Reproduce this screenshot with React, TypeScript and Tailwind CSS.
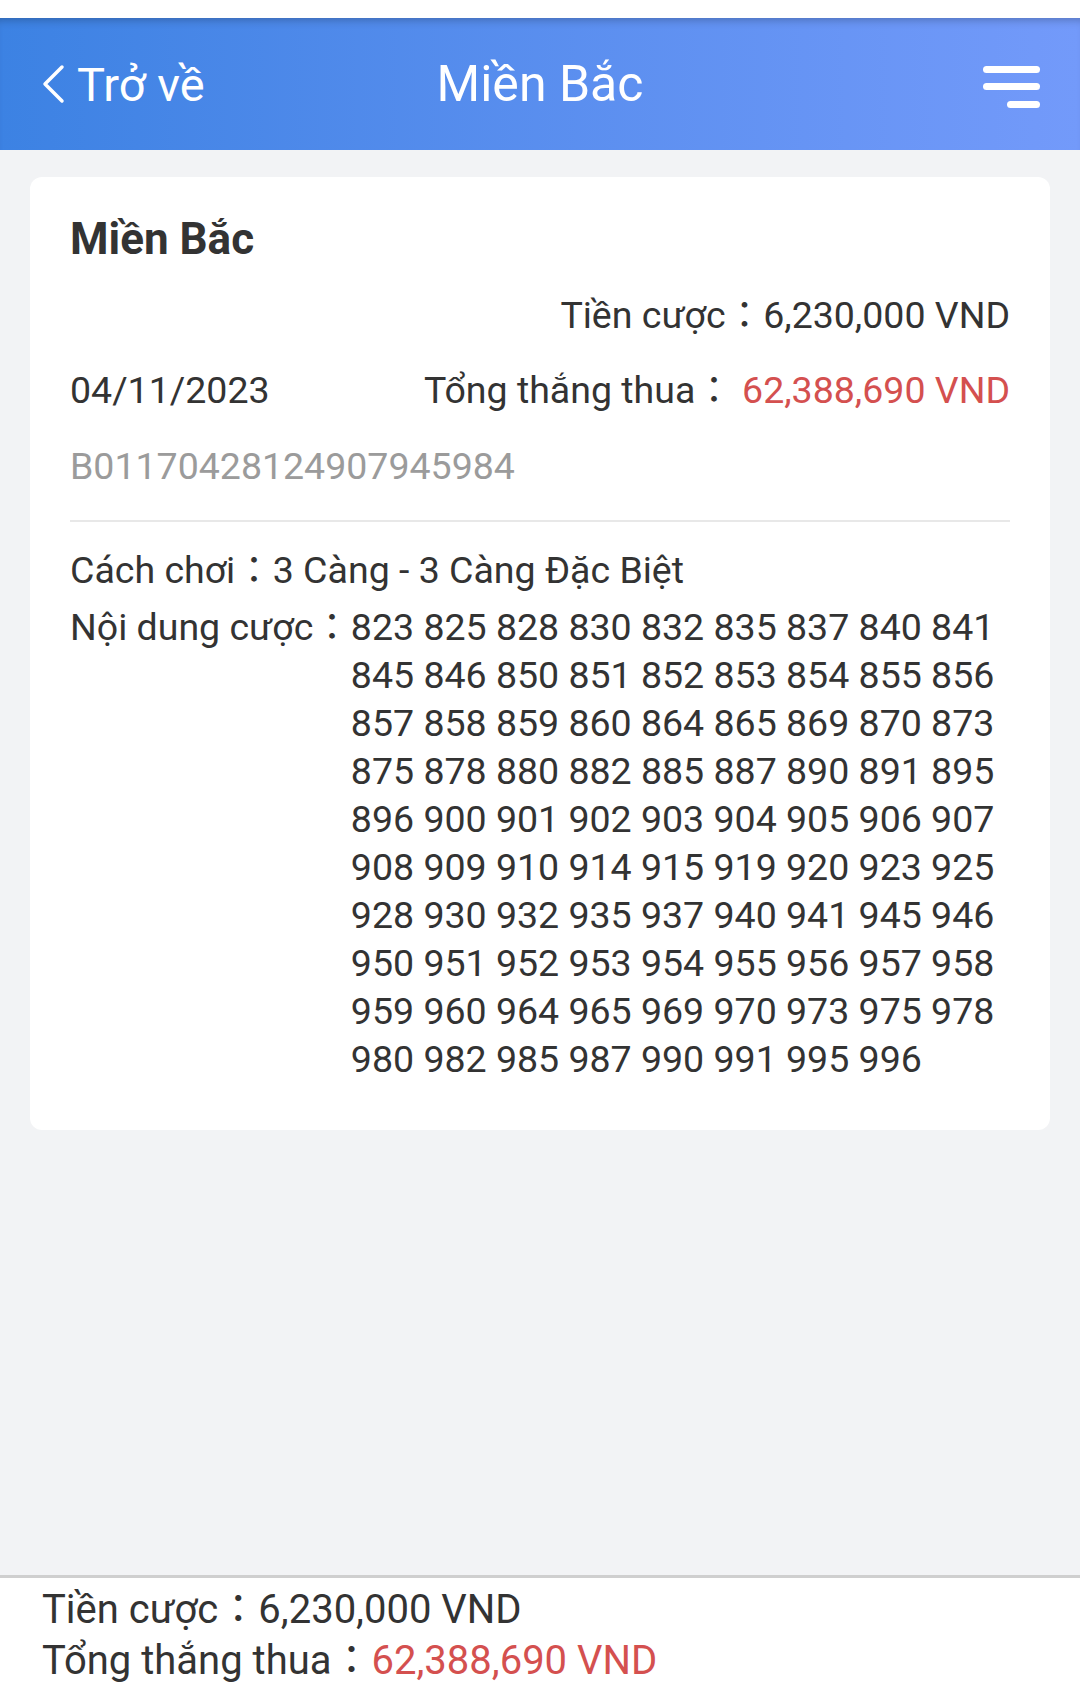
// App.tsx
const numbers =
  "823 825 828 830 832 835 837 840 841 845 846 850 851 852 853 854 855 856 857 858 859 860 864 865 869 870 873 875 878 880 882 885 887 890 891 895 896 900 901 902 903 904 905 906 907 908 909 910 914 915 919 920 923 925 928 930 932 935 937 940 941 945 946 950 951 952 953 954 955 956 957 958 959 960 964 965 969 970 973 975 978 980 982 985 987 990 991 995 996";

const bet = {
  region: "Miền Bắc",
  date: "04/11/2023",
  code: "B01170428124907945984",
  stake: "6,230,000 VND",
  result: "62,388,690 VND",
  play: "3 Càng - 3 Càng Đặc Biệt",
};

function BackIcon() {
  return (
    <svg width="24" height="40" viewBox="0 0 24 40" fill="none">
      <path d="M21 3 L4 20 L21 37" stroke="white" strokeWidth="3.5" strokeLinecap="round" strokeLinejoin="round" />
    </svg>
  );
}

function MenuIcon() {
  return (
    <svg width="58" height="42" viewBox="0 0 58 42" fill="white">
      <rect x="0" y="0" width="57" height="7" rx="3.5" />
      <rect x="0" y="17" width="57" height="7" rx="3.5" />
      <rect x="24" y="35" width="33" height="7" rx="3.5" />
    </svg>
  );
}

export default function App() {
  return (
    <div className="w-full h-[1698px] flex flex-col bg-[#f2f3f5] text-[#333] font-['Roboto','Noto_Sans_CJK_JP',sans-serif]">
      <div className="h-[18px] bg-white" />

      <header className="h-[132px] grid grid-cols-3 items-center text-white bg-gradient-to-r from-[#3c82e3] to-[#739afa] shadow-[inset_0_8px_8px_-6px_rgba(0,0,0,0.25)]">
        <div className="flex items-center pl-[41px] gap-[12px]">
          <BackIcon />
          <span className="text-[47px] leading-none">Trở về</span>
        </div>
        <h1 className="text-center text-[50px] leading-none whitespace-nowrap">{bet.region}</h1>
        <div className="flex justify-end pr-[39px] pt-[6px]">
          <MenuIcon />
        </div>
      </header>

      <main className="flex-1 px-[30px] pt-[27px]">
        <div className="bg-white rounded-[12px] px-[40px] pt-[36px] pb-[47px] text-[37.5px] leading-[48px]">
          <h2 className="text-[44px] leading-[52px] font-bold text-[#333]">{bet.region}</h2>

          <div className="mt-[26px] text-right">
            Tiền cược：{bet.stake}
          </div>

          <div className="mt-[27px] flex justify-between">
            <span>{bet.date}</span>
            <span>
              Tổng thắng thua： <span className="text-[#d4504f]">{bet.result}</span>
            </span>
          </div>

          <div className="mt-[28px] text-[#9b9b9b]">{bet.code}</div>

          <div className="mt-[30px] h-[2px] bg-[#e8e8e8]" />

          <div className="mt-[24px]">Cách chơi：{bet.play}</div>

          <div className="mt-[9px] flex">
            <span className="shrink-0">Nội dung cược：</span>
            <p className="flex-1">{numbers}</p>
          </div>
        </div>
      </main>

      <footer className="h-[123px] bg-white border-t-[3px] border-[#cfcfcf] pl-[42px] pt-[6px] text-[40px] leading-[51px]">
        <div>Tiền cược：{bet.stake}</div>
        <div>
          Tổng thắng thua：<span className="text-[#d4504f]">{bet.result}</span>
        </div>
      </footer>
    </div>
  );
}
